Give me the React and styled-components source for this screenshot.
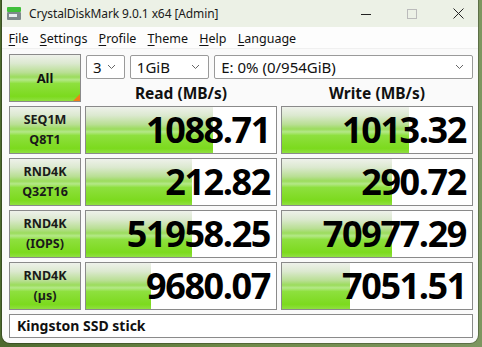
import React from "react";
import styled, { createGlobalStyle } from "styled-components";

const GlobalStyle = createGlobalStyle`
  html, body {
    margin: 0;
    padding: 0;
    background: #5f7a3c;
    font-family: "Noto Sans", "Liberation Sans", sans-serif;
  }
`;

const Desktop = styled.div`
  width: 482px;
  height: 347px;
  background: linear-gradient(90deg, #4d6a2e 0%, #6f8a48 50%, #7d9660 100%);
  overflow: hidden;
`;

const Window = styled.div`
  margin-left: 2px;
  width: 476px;
  height: 343px;
  background: #fafafa;
  border-radius: 0 0 8px 8px;
  box-shadow: 0 0 0 1px rgba(0, 0, 0, 0.25);
  overflow: hidden;
  display: flex;
  flex-direction: column;
`;

const TitleBar = styled.div`
  height: 27px;
  flex: none;
  background: #ecf1e6;
  display: flex;
  align-items: center;
  padding-left: 4px;
  font-size: 12px;
  color: #1a1a1a;
`;

const Title = styled.span`
  margin-left: 7px;
  flex: 1;
  letter-spacing: -0.1px;
`;

const Control = styled.div`
  width: 46px;
  height: 27px;
  display: flex;
  align-items: center;
  justify-content: center;
  &:last-child {
    margin-right: -3px;
  }
`;

const MenuBar = styled.div`
  height: 20px;
  flex: none;
  background: #fdfdfd;
  display: flex;
  align-items: center;
  padding: 1px 0 0 1px;
  font-size: 12.5px;
  color: #111;
  border-bottom: 1px solid #f0f0f0;
`;

const MenuItem = styled.span`
  padding: 0 5.6px;
  u {
    text-decoration-thickness: 1px;
    text-underline-offset: 2px;
  }
`;

const Content = styled.div`
  padding: 5px 0 0 7px;
  display: grid;
  grid-template-columns: 72px 192px 192px;
  grid-template-rows: 24px 20px;
  grid-auto-rows: 48px;
  column-gap: 4px;
  row-gap: 4px;
`;

const green = `linear-gradient(180deg,
  #eef1ea 0%, #dce9d0 18%, #b9df94 38%, #9bdc5c 48%,
  #b4e888 54%, #8ee03e 62%, #7cda1e 90%, #8fe040 100%)`;

const AllButton = styled.div`
  position: relative;
  grid-row: span 2;
  height: 46px;
  border: 1px solid #8a8a8a;
  background: ${green};
  display: flex;
  align-items: center;
  justify-content: center;
  font-weight: 700;
  font-size: 13px;
  color: #111;
  &::after {
    content: "";
    position: absolute;
    right: 0;
    bottom: 0;
    border-style: solid;
    border-width: 0 0 7px 7px;
    border-color: transparent transparent #f07d1a transparent;
  }
`;

const SelectRow = styled.div`
  grid-column: span 2;
  display: flex;
  gap: 5px;
  height: 24px;
  margin-top: 1px;
  padding-left: 1px;
`;

const Select = styled.div`
  width: ${(p) => p.$w}px;
  box-sizing: border-box;
  height: 24px;
  border: 1px solid #9a9a9a;
  border-radius: 2px;
  background: #fff;
  display: flex;
  align-items: center;
  padding: 0 8px 0 6px;
  font-size: 15px;
  color: #111;
  span {
    flex: 1;
  }
`;

const Header = styled.div`
  font-weight: 700;
  font-size: 15.5px;
  text-align: center;
  color: #111;
  height: 20px;
  line-height: 22px;
`;

const Label = styled.div`
  height: 46px;
  border: 1px solid #8a8a8a;
  background: ${green};
  display: flex;
  flex-direction: column;
  align-items: center;
  justify-content: center;
  font-weight: 700;
  font-size: 12.5px;
  line-height: 20px;
  color: #1a1a1a;
`;

const ValueBox = styled.div`
  position: relative;
  height: 46px;
  border: 1px solid #8a8a8a;
  background: #fff;
  overflow: hidden;
`;

const Bar = styled.div`
  position: absolute;
  left: 0;
  top: 0;
  bottom: 0;
  background: ${green};
`;

const Value = styled.div`
  position: relative;
  text-align: right;
  padding-right: 6px;
  font-family: "Open Sans", "Noto Sans", sans-serif;
  font-weight: 700;
  font-size: 36px;
  letter-spacing: -1.4px;
  line-height: 46px;
  color: #000;
`;

const Comment = styled.div`
  grid-column: span 3;
  height: 22px;
  border: 1px solid #8a8a8a;
  background: #fff;
  font-weight: 700;
  font-size: 14px;
  line-height: 22px;
  padding-left: 7px;
  color: #111;
`;

const Chevron = () => (
  <svg width="9" height="6" viewBox="0 0 9 6">
    <path d="M1 1l3.5 3.5L8 1" fill="none" stroke="#666" strokeWidth="1" />
  </svg>
);

const rows = [
  { l1: "SEQ1M", l2: "Q8T1", r: "1088.71", w: "1013.32", rp: 67, wp: 67 },
  { l1: "RND4K", l2: "Q32T16", r: "212.82", w: "290.72", rp: 56, wp: 58 },
  { l1: "RND4K", l2: "(IOPS)", r: "51958.25", w: "70977.29", rp: 56, wp: 58 },
  { l1: "RND4K", l2: "(µs)", r: "9680.07", w: "7051.51", rp: 34, wp: 36 },
];

const menu = [
  ["F", "ile"],
  ["S", "ettings"],
  ["P", "rofile"],
  ["T", "heme"],
  ["H", "elp"],
  ["L", "anguage"],
];

export default function App() {
  return (
    <Desktop>
      <GlobalStyle />
      <Window>
        <TitleBar>
          <svg width="16" height="15" viewBox="0 0 16 15">
            <rect x="1" y="1" width="14" height="5" rx="1" fill="#3fbf3a" />
            <rect x="1" y="6" width="14" height="8" rx="1" fill="#7d8a8a" />
            <rect x="3" y="8" width="8" height="3" fill="#e8eeee" />
          </svg>
          <Title>CrystalDiskMark 9.0.1 x64 [Admin]</Title>
          <Control>
            <svg width="10" height="10" viewBox="0 0 10 10">
              <path d="M0 5.5h10" stroke="#222" strokeWidth="1" />
            </svg>
          </Control>
          <Control>
            <svg width="10" height="10" viewBox="0 0 10 10">
              <rect x="0.5" y="0.5" width="9" height="9" fill="none" stroke="#bbb" strokeWidth="1" />
            </svg>
          </Control>
          <Control>
            <svg width="11" height="11" viewBox="0 0 11 11">
              <path d="M0.5 0.5l10 10M10.5 0.5l-10 10" stroke="#222" strokeWidth="1" />
            </svg>
          </Control>
        </TitleBar>
        <MenuBar>
          {menu.map(([u, rest]) => (
            <MenuItem key={u}>
              <u>{u}</u>
              {rest}
            </MenuItem>
          ))}
        </MenuBar>
        <Content>
          <AllButton>All</AllButton>
          <SelectRow>
            <Select $w={39}>
              <span>3</span>
              <Chevron />
            </Select>
            <Select $w={80}>
              <span>1GiB</span>
              <Chevron />
            </Select>
            <Select $w={261}>
              <span>E: 0% (0/954GiB)</span>
              <Chevron />
            </Select>
          </SelectRow>
          <Header>Read (MB/s)</Header>
          <Header>Write (MB/s)</Header>
          {rows.map((row, i) => (
            <React.Fragment key={i}>
              <Label>
                <div>{row.l1}</div>
                <div>{row.l2}</div>
              </Label>
              <ValueBox>
                <Bar style={{ width: `${row.rp}%` }} />
                <Value>{row.r}</Value>
              </ValueBox>
              <ValueBox>
                <Bar style={{ width: `${row.wp}%` }} />
                <Value>{row.w}</Value>
              </ValueBox>
            </React.Fragment>
          ))}
          <Comment>Kingston SSD stick</Comment>
        </Content>
      </Window>
    </Desktop>
  );
}
